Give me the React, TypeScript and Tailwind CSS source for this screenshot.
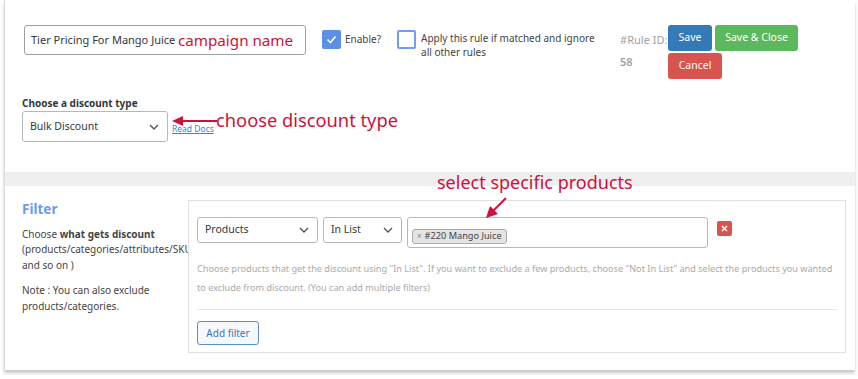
const ui = { fontFamily: '"Noto Sans", "Open Sans", sans-serif' };

function Chevron() {
  return (
    <svg width="10" height="6" viewBox="0 0 10 6" className="shrink-0">
      <path d="M1 1l4 4 4-4" fill="none" stroke="#555" strokeWidth="1.4" />
    </svg>
  );
}

function Select({ label, w, h = "h-[26px]" }: { label: string; w: string; h?: string }) {
  return (
    <div className={`flex ${w} ${h} items-center justify-between rounded-[3px] border border-[#b4b9be] bg-white pl-[7px] pr-[8px] text-[10.5px] text-[#32373c]`}>
      <span>{label}</span>
      <Chevron />
    </div>
  );
}

export default function App() {
  return (
    <div className="min-h-screen bg-white" style={ui}>
      <div className="relative ml-[4px] w-[851px] border-l border-[#dcdcdc] bg-white shadow-[0_3px_3px_rgba(0,0,0,0.22)]">
        {/* top settings */}
        <div className="h-[172px] pl-[17px] pt-[25px]">
          <div className="flex items-start">
            <div className="ml-[2px] flex h-[30px] w-[282px] items-center rounded-[3px] border border-[#9aa0a6] px-[6px] text-[11px] text-[#32373c]">
              Tier Pricing For Mango Juice
            </div>
            <div className="ml-[16px] mt-[5px] flex items-center">
              <span className="flex h-[19px] w-[19px] items-center justify-center rounded-[2px] bg-[#5b8fe8]">
                <svg width="11" height="9" viewBox="0 0 11 9">
                  <path d="M1.5 4.5l3 3 5-6" fill="none" stroke="#fff" strokeWidth="1.6" />
                </svg>
              </span>
              <span className="ml-[4px] text-[10px] text-[#444]">Enable?</span>
            </div>
            <div className="ml-[16px] mt-[5px] flex items-start">
              <span className="h-[19px] w-[19px] shrink-0 rounded-[2px] border-2 border-[#6f9ff0] bg-white" />
              <span className="ml-[5px] mt-[1px] w-[178px] text-[10px] leading-[14px] text-[#444]">
                Apply this rule if matched and ignore all other rules
              </span>
            </div>
            <div className="ml-[21px] mt-[4px] w-[48px] whitespace-nowrap text-[11px] leading-[22px] text-[#a0a0a0]">
              <div>#Rule ID:</div>
              <div className="font-semibold">58</div>
            </div>
            <div className="flex flex-col gap-[2px]">
              <div className="flex gap-[3px]">
                <button className="h-[26px] w-[44px] rounded-[3px] bg-[#337ab7] text-[10.5px] text-white">Save</button>
                <button className="h-[26px] w-[83px] rounded-[3px] bg-[#5cb85c] text-[10.5px] text-white">Save &amp; Close</button>
              </div>
              <button className="h-[26px] w-[54px] rounded-[3px] bg-[#d9534f] text-[10.5px] text-white">Cancel</button>
            </div>
          </div>

          <div className="mt-[17px] text-[10px] font-bold leading-[15px] text-[#32373c]">Choose a discount type</div>
          <div className="flex items-end">
            <Select label="Bulk Discount" w="w-[146px]" h="h-[31px]" />
            <a className="mb-[6px] ml-[4px] text-[8.5px] text-[#2e8bcc] underline">Read Docs</a>
          </div>
        </div>

        <div className="h-[14px] bg-[#efefef]" />

        {/* filter section */}
        <div className="flex pb-[17px] pl-[17px] pt-[14px]">
          <div className="w-[166px] shrink-0 pt-[2px] text-[10px] leading-[15.5px] text-[#444]">
            <div className="text-[13.5px] font-bold text-[#6a9bf0]">Filter</div>
            <p className="mt-[9px]">
              Choose <b>what gets discount</b>{" "}
              <span className="whitespace-nowrap">(products/categories/attributes/SKUs</span> and so on )
            </p>
            <p className="mt-[10px]">Note : You can also exclude products/categories.</p>
          </div>
          <div className="relative h-[153px] w-[658px] border border-[#e0e0e0] bg-white pl-[8px] pr-[8px] pt-[16px]">
            <div className="flex items-start gap-[5px]">
              <Select label="Products" w="w-[121px]" />
              <Select label="In List" w="w-[79px]" />
              <div className="h-[31px] w-[301px] rounded-[3px] border border-[#b4b9be] pl-[4px] pt-[3px]">
                <span className="inline-flex h-[15px] items-center rounded-[3px] border border-[#aaa] bg-[#e4e4e4] px-[4px] text-[9.2px] text-[#444]">
                  <span className="mr-[3px] text-[8px] text-[#888]">×</span>#220 Mango Juice
                </span>
              </div>
              <span className="ml-[4px] mt-[4px] flex h-[15px] w-[15px] items-center justify-center rounded-[2px] bg-[#d9534f]">
                <svg width="7" height="7" viewBox="0 0 7 7">
                  <path d="M1 1l5 5M6 1l-5 5" stroke="#fff" strokeWidth="1.6" />
                </svg>
              </span>
            </div>
            <p className="mt-[11px] text-[9.15px] leading-[19px] text-[#aaa]">
              Choose products that get the discount using "In List". If you want to exclude a few products, choose "Not In List" and select the products you wanted to exclude from discount. (You can add multiple filters)
            </p>
            <div className="mt-[12px] h-px bg-[#e5e5e5]" />
            <button className="mt-[11px] h-[24px] w-[62px] rounded-[3px] border border-[#5b8fc8] bg-[#f6f8fb] text-[10px] text-[#3a75b8]">
              Add filter
            </button>
          </div>
        </div>

        {/* annotations */}
        <div className="pointer-events-none absolute left-[173px] top-[29px] text-[15.2px] text-[#d0103a]">
          campaign name
        </div>
        <svg className="pointer-events-none absolute left-[165px] top-[113px]" width="50" height="16" viewBox="0 0 50 16">
          <path d="M47 8H12" stroke="#d0103a" strokeWidth="2" />
          <path d="M2 8l11-5v10z" fill="#d0103a" />
        </svg>
        <div className="pointer-events-none absolute left-[211px] top-[106px] text-[18.3px] text-[#d0103a]">
          choose discount type
        </div>
        <div className="pointer-events-none absolute left-[432px] top-[169px] text-[18px] text-[#d0103a]">
          select specific products
        </div>
        <svg className="pointer-events-none absolute left-[478px] top-[196px]" width="26" height="24" viewBox="0 0 26 24">
          <path d="M23 2L10 15" stroke="#d0103a" strokeWidth="2" />
          <path d="M3 22l4-12 8 8z" fill="#d0103a" />
        </svg>
      </div>
    </div>
  );
}
